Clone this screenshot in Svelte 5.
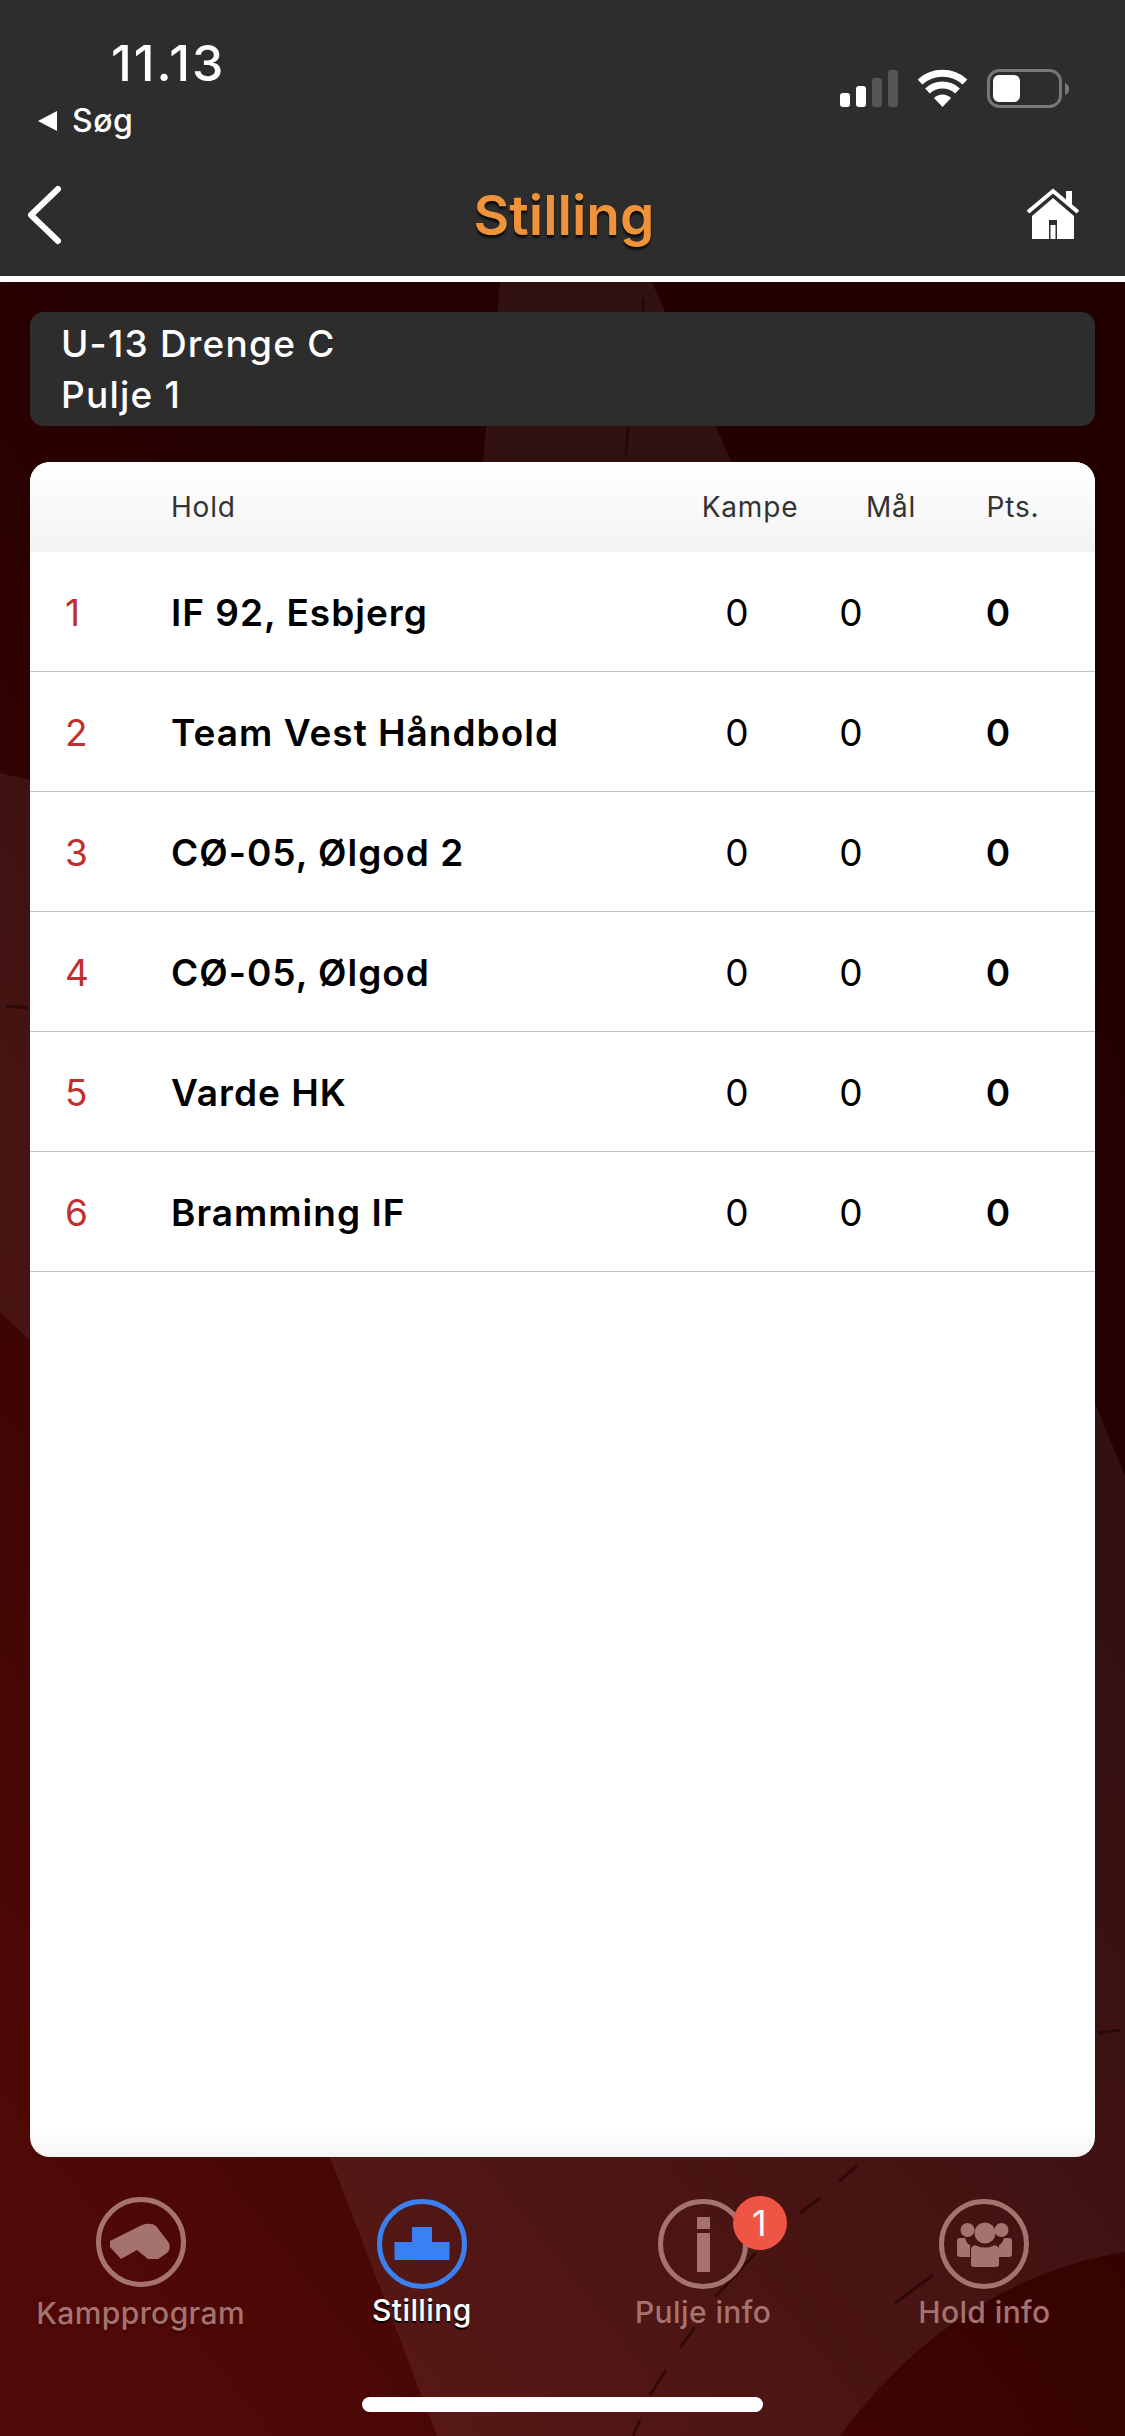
<script>
  const teams = ['IF 92, Esbjerg', 'Team Vest Håndbold', 'CØ-05, Ølgod 2', 'CØ-05, Ølgod', 'Varde HK', 'Bramming IF'];
</script>

<div class="app">
  <svg class="bg" viewBox="0 0 1125 2436" aria-hidden="true">
    <defs>
      <linearGradient id="bgGrad" x1="0.72" y1="0.1" x2="0.2" y2="1">
        <stop offset="0" stop-color="#220000" />
        <stop offset="0.35" stop-color="#260000" />
        <stop offset="1" stop-color="#500906" />
      </linearGradient>
    </defs>
    <rect width="1125" height="2436" fill="url(#bgGrad)" />
    <g fill="#fff" fill-opacity="0.065">
      <path d="M500 282 H652 L735 470 V600 H470 L482 470 Z" />
      <path d="M0 773 L200 820 V1500 L0 1312 Z" />
      <path d="M330 2157 L300 2000 L700 1600 L1095 1403 L1125 1476 V2252 C1010 2270 910 2340 840 2436 H437 Z" />
    </g>
    <g stroke="#1c0000" stroke-opacity="0.55" stroke-width="3" fill="none">
      <path d="M643 298 V330 M628 426 L626 455" />
      <path d="M6 1006 L28 1008" />
      <path d="M1098 2033 L1120 2030" />
      <path d="M857 2165 L839 2182 M820 2198 L800 2213 M933 2275 L895 2303" />
      <path d="M756 2253 L715 2297 M695 2327 L680 2348 M666 2370 L650 2395 M640 2420 L633 2436" />
    </g>
  </svg>

  <header class="topbar">
    <div class="status">
      <div class="status-left">
        <div class="time">11.13</div>
        <div class="search">
          <svg class="search-arrow" viewBox="0 0 21 20"><path d="M20 0 V20 L1 10 Z" fill="#fff" /></svg>
          <span>Søg</span>
        </div>
      </div>
      <svg class="status-icons" viewBox="840 66 232 44">
        <rect x="840" y="93" width="10" height="14" rx="3" fill="#fff" />
        <rect x="856" y="86" width="10" height="21" rx="3" fill="#fff" />
        <rect x="872" y="78" width="10" height="29" rx="3" fill="#555" />
        <rect x="888" y="70" width="10" height="37" rx="3" fill="#555" />
        <path d="M920 82 A33.6 33.6 0 0 1 965 82" stroke="#fff" stroke-width="7" fill="none" />
        <path d="M927.5 91 A22 22 0 0 1 957.5 91" stroke="#fff" stroke-width="7" fill="none" />
        <path d="M942.5 107 L934 98 A12 12 0 0 1 951 98 Z" fill="#fff" />
        <rect x="988.5" y="70.5" width="72" height="36" rx="11" stroke="#777" stroke-width="3" fill="none" />
        <rect x="993" y="75" width="27" height="27" rx="6" fill="#fff" />
        <path d="M1065 83 C1068 84 1069 86 1069 89 C1069 92 1068 94 1065 95 Z" fill="#777" />
      </svg>
    </div>
    <nav class="nav">
      <svg class="back" viewBox="0 0 40 62">
        <path d="M32 4 L5 30 L32 56" stroke="#fff" stroke-width="6" stroke-linecap="round" stroke-linejoin="round" fill="none" />
      </svg>
      <h1>Stilling</h1>
      <svg class="home" viewBox="0 0 56 54">
        <path d="M3 26 L28 5 L53 26" stroke="#fff" stroke-width="4" fill="none" />
        <path d="M41 5 H47 V19 L41 14 Z" fill="#fff" />
        <path d="M28 12 L7 30 V53 H24 V34 H32 V53 H49 V30 Z" fill="#fff" />
        <rect x="25.5" y="39" width="5" height="14" fill="#fff" />
      </svg>
    </nav>
  </header>

  <main class="content">
    <section class="info">
      <div>U-13 Drenge C</div>
      <div>Pulje 1</div>
    </section>

    <section class="card">
      <div class="thead">
        <span></span>
        <span>Hold</span>
        <span class="c">Kampe</span>
        <span class="c">Mål</span>
        <span class="c">Pts.</span>
      </div>
      {#each teams as team, i}
        <div class="row">
          <span class="rank">{i + 1}</span>
          <span class="name">{team}</span>
          <span class="c">0</span>
          <span class="c">0</span>
          <span class="c pts">0</span>
        </div>
      {/each}
    </section>
  </main>

  <footer class="tabs">
    <div class="tab first">
      <svg viewBox="0 0 90 90">
        <circle cx="45" cy="45" r="42.5" class="ring" />
        <path class="glyph" d="M14 44 L46 28 Q55 25 60 29 L73 46 Q75 52 71 56 L62 62 H52 L41 53 L25 62 L14 50 Z" />
      </svg>
      <span>Kampprogram</span>
    </div>
    <div class="tab active">
      <svg viewBox="0 0 90 90">
        <circle cx="45" cy="45" r="42.5" class="ring" />
        <path class="glyph" d="M35 28 H55 V43 H72.5 V61 H17.5 V43 H35 Z" />
      </svg>
      <span>Stilling</span>
    </div>
    <div class="tab">
      <svg viewBox="0 0 90 90">
        <circle cx="45" cy="45" r="42.5" class="ring" />
        <rect class="glyph" x="39" y="18" width="13" height="12" />
        <rect class="glyph" x="39" y="34" width="13" height="39" />
      </svg>
      <span>Pulje info</span>
      <b class="badge">1</b>
    </div>
    <div class="tab">
      <svg viewBox="0 0 90 90">
        <circle cx="45" cy="45" r="42.5" class="ring" />
        <circle class="glyph" cx="28.5" cy="31" r="7" />
        <circle class="glyph" cx="62.5" cy="31" r="7" />
        <path class="glyph" d="M18 42 Q18 39 21 39 H26 Q28 45 31 46 V58 H21 Q18 58 18 55 Z" />
        <path class="glyph" d="M73 42 Q73 39 70 39 H65 Q63 45 60 46 V58 H70 Q73 58 73 55 Z" />
        <circle class="glyph" cx="46" cy="34" r="10.5" />
        <path class="glyph" d="M32 49 Q35 45 38 47 Q46 50 54 47 Q57 45 60 49 V65 Q60 68 57 68 H35 Q32 68 32 65 Z" />
      </svg>
      <span>Hold info</span>
    </div>
  </footer>

  <div class="home-bar"></div>
</div>

<style>
  :global(body) {
    margin: 0;
    font-family: Inter, "Noto Sans", sans-serif;
    background: #220000;
  }

  .app {
    position: relative;
    width: 1125px;
    height: 2436px;
    display: flex;
    flex-direction: column;
    overflow: hidden;
  }

  .bg {
    position: absolute;
    inset: 0;
    width: 100%;
    height: 100%;
  }

  .topbar {
    position: relative;
    height: 276px;
    background: #2d2d2d;
    border-bottom: 6px solid #fff;
    color: #fff;
  }

  .status {
    display: flex;
    justify-content: space-between;
    height: 150px;
  }

  .status-left {
    padding: 35px 0 0 37px;
  }

  .time {
    margin-left: 74px;
    font-size: 50px;
    line-height: 56px;
    font-weight: 500;
    letter-spacing: 2px;
  }

  .search {
    display: flex;
    align-items: center;
    gap: 14px;
    margin-top: 10px;
    font-size: 32px;
    line-height: 40px;
    font-weight: 500;
    letter-spacing: 0.5px;
  }

  .search-arrow {
    width: 21px;
    height: 20px;
  }

  .status-icons {
    width: 232px;
    height: 44px;
    margin: 66px 53px 0 0;
  }

  .nav {
    display: grid;
    grid-template-columns: 1fr auto 1fr;
    align-items: center;
    height: 126px;
    padding: 0 44px 0 26px;
  }

  .back {
    width: 40px;
    height: 62px;
    margin-top: 6px;
  }

  h1 {
    margin: 3px 0 0 21px;
    font-size: 55px;
    font-weight: 600;
    color: #f0923a;
    text-shadow: 0 3px 2px rgba(0, 0, 0, 0.7);
  }

  .home {
    justify-self: end;
    width: 56px;
    height: 54px;
  }

  .content {
    position: relative;
    flex: 1;
    display: flex;
    flex-direction: column;
    gap: 36px;
    padding: 30px 30px 0;
    min-height: 0;
  }

  .info {
    height: 114px;
    box-sizing: border-box;
    padding: 6px 31px;
    border-radius: 14px;
    background: #2d2d2d;
    color: #fff;
    font-size: 37px;
    line-height: 51px;
    font-weight: 500;
    letter-spacing: 1.2px;
  }

  .card {
    flex: 1;
    border-radius: 20px;
    overflow: hidden;
    background: linear-gradient(to top, #f5f5f5, #fff 30px);
  }

  .thead,
  .row {
    display: grid;
    align-items: center;
  }

  .thead {
    grid-template-columns: 141px 1fr 140px 142px 102px;
    height: 90px;
    padding-right: 31px;
    background: linear-gradient(#fff, #f3f3f3);
    color: #333;
    font-size: 28px;
    font-weight: 400;
    letter-spacing: 0.8px;
  }

  .row {
    grid-template-columns: 141px 1fr 114px 114px 180px;
    height: 120px;
    box-sizing: border-box;
    padding-top: 2px;
    padding-right: 7px;
    border-bottom: 1px solid #c4c4c4;
    background: #fff;
    color: #000;
    font-size: 37px;
  }

  .c {
    text-align: center;
  }

  .rank {
    padding-left: 35px;
    color: #c0302e;
  }

  .name {
    letter-spacing: 1px;
  }

  .name,
  .pts {
    font-weight: 600;
  }

  .tabs {
    position: relative;
    display: grid;
    grid-template-columns: repeat(4, 1fr);
    padding-top: 42px;
    height: 240px;
    box-sizing: border-box;
    color: #a5736f;
  }

  .tab {
    position: relative;
    display: flex;
    flex-direction: column;
    align-items: center;
    gap: 3px;
    font-size: 30px;
    font-weight: 500;
    line-height: 40px;
    letter-spacing: 0.4px;
  }

  .tab svg {
    width: 90px;
    height: 90px;
  }

  .tab.first {
    margin-top: -2px;
    gap: 6px;
  }

  .tab.first span {
    text-shadow: 0 3px 1px rgba(40, 0, 0, 0.35);
  }

  .ring {
    fill: none;
    stroke: currentColor;
    stroke-width: 5;
  }

  .glyph {
    fill: currentColor;
  }

  .tab.active {
    color: #3a80f2;
    gap: 1px;
  }

  .tab.active span {
    color: #fff;
    text-shadow: 0 2px 1px #000;
  }

  .badge {
    position: absolute;
    top: -3px;
    left: 170px;
    width: 54px;
    height: 54px;
    border-radius: 50%;
    background: #ee5545;
    color: #fff;
    font-size: 36px;
    font-weight: 400;
    line-height: 54px;
    text-align: center;
  }

  .home-bar {
    position: relative;
    align-self: center;
    width: 401px;
    height: 15px;
    margin-bottom: 24px;
    border-radius: 8px;
    background: #fff;
  }
</style>
